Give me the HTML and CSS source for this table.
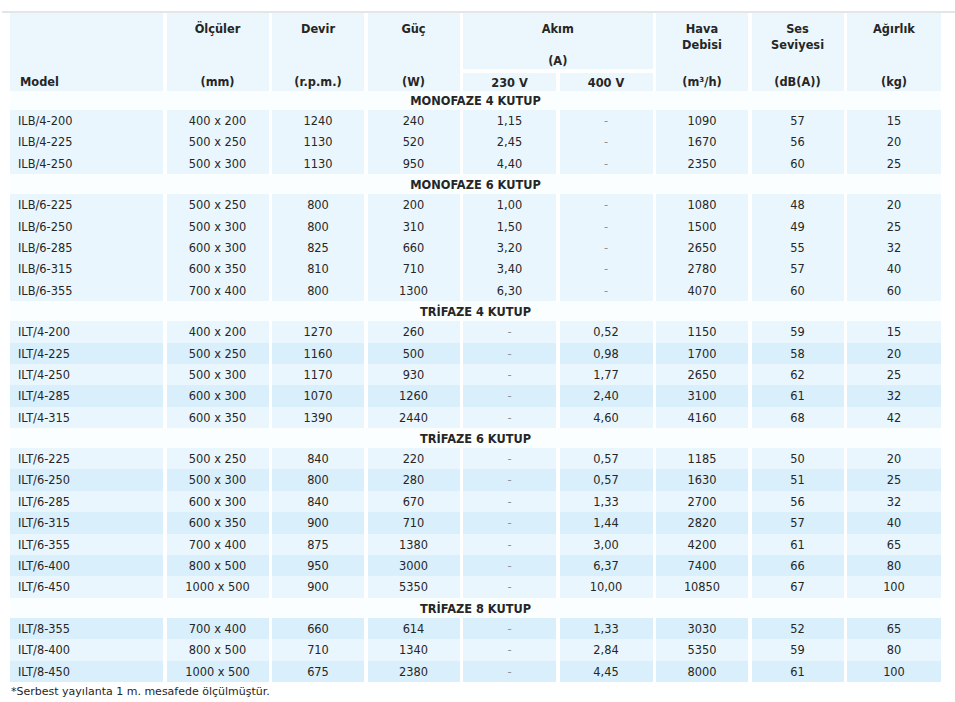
FILE: index.html
```html
<!DOCTYPE html>
<html lang="tr">
<head>
<meta charset="utf-8">
<title>Teknik Tablo</title>
<link rel="stylesheet" href="styles.css">
</head>
<body>
<div class="page">
  <div class="rule"></div>
  <div class="sheet">
    <div class="head">
      <div class="hc model"><span>Model</span></div>
      <div class="hc"><span>Ölçüler</span><span>(mm)</span></div>
      <div class="hc"><span>Devir</span><span>(r.p.m.)</span></div>
      <div class="hc"><span>Güç</span><span>(W)</span></div>
      <div class="hc akim"><span>Akım</span><span>(A)</span></div>
      <div class="hc v230">230 V</div>
      <div class="hc v400">400 V</div>
      <div class="hc hava"><span>Hava<br>Debisi</span><span>(m<sup>3</sup>/h)</span></div>
      <div class="hc ses"><span>Ses<br>Seviyesi</span><span>(dB(A))</span></div>
      <div class="hc agir"><span>Ağırlık</span><span>(kg)</span></div>
    </div>

    <div class="sec first">MONOFAZE 4 KUTUP</div>
    <div class="row l"><div>ILB/4-200</div><div>400 x 200</div><div>1240</div><div>240</div><div>1,15</div><div class="d">-</div><div>1090</div><div>57</div><div>15</div></div>
    <div class="row l"><div>ILB/4-225</div><div>500 x 250</div><div>1130</div><div>520</div><div>2,45</div><div class="d">-</div><div>1670</div><div>56</div><div>20</div></div>
    <div class="row l"><div>ILB/4-250</div><div>500 x 300</div><div>1130</div><div>950</div><div>4,40</div><div class="d">-</div><div>2350</div><div>60</div><div>25</div></div>

    <div class="sec">MONOFAZE 6 KUTUP</div>
    <div class="row l"><div>ILB/6-225</div><div>500 x 250</div><div>800</div><div>200</div><div>1,00</div><div class="d">-</div><div>1080</div><div>48</div><div>20</div></div>
    <div class="row l"><div>ILB/6-250</div><div>500 x 300</div><div>800</div><div>310</div><div>1,50</div><div class="d">-</div><div>1500</div><div>49</div><div>25</div></div>
    <div class="row l"><div>ILB/6-285</div><div>600 x 300</div><div>825</div><div>660</div><div>3,20</div><div class="d">-</div><div>2650</div><div>55</div><div>32</div></div>
    <div class="row l"><div>ILB/6-315</div><div>600 x 350</div><div>810</div><div>710</div><div>3,40</div><div class="d">-</div><div>2780</div><div>57</div><div>40</div></div>
    <div class="row l"><div>ILB/6-355</div><div>700 x 400</div><div>800</div><div>1300</div><div>6,30</div><div class="d">-</div><div>4070</div><div>60</div><div>60</div></div>

    <div class="sec">TRİFAZE 4 KUTUP</div>
    <div class="row l"><div>ILT/4-200</div><div>400 x 200</div><div>1270</div><div>260</div><div class="d">-</div><div>0,52</div><div>1150</div><div>59</div><div>15</div></div>
    <div class="row k"><div>ILT/4-225</div><div>500 x 250</div><div>1160</div><div>500</div><div class="d">-</div><div>0,98</div><div>1700</div><div>58</div><div>20</div></div>
    <div class="row l"><div>ILT/4-250</div><div>500 x 300</div><div>1170</div><div>930</div><div class="d">-</div><div>1,77</div><div>2650</div><div>62</div><div>25</div></div>
    <div class="row k"><div>ILT/4-285</div><div>600 x 300</div><div>1070</div><div>1260</div><div class="d">-</div><div>2,40</div><div>3100</div><div>61</div><div>32</div></div>
    <div class="row l"><div>ILT/4-315</div><div>600 x 350</div><div>1390</div><div>2440</div><div class="d">-</div><div>4,60</div><div>4160</div><div>68</div><div>42</div></div>

    <div class="sec">TRİFAZE 6 KUTUP</div>
    <div class="row l"><div>ILT/6-225</div><div>500 x 250</div><div>840</div><div>220</div><div class="d">-</div><div>0,57</div><div>1185</div><div>50</div><div>20</div></div>
    <div class="row k"><div>ILT/6-250</div><div>500 x 300</div><div>800</div><div>280</div><div class="d">-</div><div>0,57</div><div>1630</div><div>51</div><div>25</div></div>
    <div class="row l"><div>ILT/6-285</div><div>600 x 300</div><div>840</div><div>670</div><div class="d">-</div><div>1,33</div><div>2700</div><div>56</div><div>32</div></div>
    <div class="row k"><div>ILT/6-315</div><div>600 x 350</div><div>900</div><div>710</div><div class="d">-</div><div>1,44</div><div>2820</div><div>57</div><div>40</div></div>
    <div class="row l"><div>ILT/6-355</div><div>700 x 400</div><div>875</div><div>1380</div><div class="d">-</div><div>3,00</div><div>4200</div><div>61</div><div>65</div></div>
    <div class="row k"><div>ILT/6-400</div><div>800 x 500</div><div>950</div><div>3000</div><div class="d">-</div><div>6,37</div><div>7400</div><div>66</div><div>80</div></div>
    <div class="row l"><div>ILT/6-450</div><div>1000 x 500</div><div>900</div><div>5350</div><div class="d">-</div><div>10,00</div><div>10850</div><div>67</div><div>100</div></div>

    <div class="sec">TRİFAZE 8 KUTUP</div>
    <div class="row k"><div>ILT/8-355</div><div>700 x 400</div><div>660</div><div>614</div><div class="d">-</div><div>1,33</div><div>3030</div><div>52</div><div>65</div></div>
    <div class="row l"><div>ILT/8-400</div><div>800 x 500</div><div>710</div><div>1340</div><div class="d">-</div><div>2,84</div><div>5350</div><div>59</div><div>80</div></div>
    <div class="row k"><div>ILT/8-450</div><div>1000 x 500</div><div>675</div><div>2380</div><div class="d">-</div><div>4,45</div><div>8000</div><div>61</div><div>100</div></div>
  </div>
  <p class="note">*Serbest yayılanta 1 m. mesafede ölçülmüştür.</p>
</div>
</body>
</html>
```

FILE: styles.css
```css
html, body {
  margin: 0;
  padding: 0;
  background: #ffffff;
}

body {
  font-family: "DejaVu Sans", Verdana, sans-serif;
  font-size: 11px;
  color: #262626;
}

.page {
  padding-top: 11px;
}

.rule {
  height: 2px;
  margin-left: 2px;
  background: #e3e5e6;
}

.sheet {
  margin-left: 10px;
  width: 931px;
  font-size: 11.4px;
}

.head,
.row {
  display: grid;
  grid-template-columns: 153px 102px 92px 92px 93px 93px 92px 92px 94px;
  column-gap: 3.5px;
}

.head {
  grid-template-rows: 56px 18px;
  row-gap: 4px;
  font-weight: bold;
  line-height: 16px;
}

.hc {
  background: #ebf7fd;
  grid-row: 1 / span 2;
  display: flex;
  flex-direction: column;
  justify-content: space-between;
  align-items: center;
  text-align: center;
  padding: 8px 2px 1px;
}

.hc.model {
  align-items: flex-start;
  justify-content: flex-end;
  padding-left: 10px;
}

.hc.akim {
  grid-column: 5 / span 2;
  grid-row: 1;
  padding-bottom: 0;
}

.hc.v230,
.hc.v400 {
  grid-row: 2;
  justify-content: center;
  padding: 1px 0 0;
}

.hc.v230 { grid-column: 5; }
.hc.v400 { grid-column: 6; }
.hc.hava { grid-column: 7; }
.hc.ses { grid-column: 8; }
.hc.agir { grid-column: 9; }

sup {
  font-size: 7px;
  line-height: 0;
  vertical-align: 4px;
}

.sec {
  height: 20px;
  line-height: 20px;
  padding-top: 1px;
  box-sizing: border-box;
  background: #fbfeff;
  text-align: center;
  font-weight: bold;
}

.sec.first {
  height: 19px;
  line-height: 19px;
}

.row {
  height: 21.4px;
}

.row > div {
  text-align: center;
  white-space: nowrap;
  padding-top: 1px;
  line-height: 20.4px;
}

.row > div:first-child {
  text-align: left;
  padding-left: 8px;
}

.row.l > div { background: #eaf6fd; }
.row.k > div { background: #d9effc; }

.row > .d {
  color: #8e9499;
}

.note {
  margin: 3px 0 0 11px;
  line-height: 14px;
}
```
